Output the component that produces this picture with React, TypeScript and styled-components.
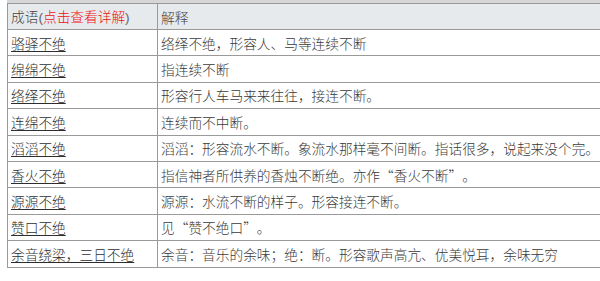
import React from "react";
import styled, { createGlobalStyle } from "styled-components";

const Global = createGlobalStyle`
  html, body { margin: 0; padding: 0; background: #ffffff; overflow: hidden; }
  body { font-family: "Noto Sans CJK SC", "Noto Sans", sans-serif; }
`;

const Page = styled.div`
  width: 600px;
  height: 281px;
  overflow: hidden;
  padding-left: 7px;
  box-sizing: border-box;
`;

const TopStrip = styled.div`
  width: 640px;
  height: 3px;
  background: #d6d6d6;
`;

const Table = styled.table`
  border-collapse: collapse;
  table-layout: fixed;
  width: 640px;
  font-size: 13.7px;
  font-weight: 300;
  color: #3a3a3a;
`;

const HeadCell = styled.th<{ $w?: number }>`
  width: ${(p) => (p.$w ? `${p.$w}px` : "auto")};
  height: 26px;
  padding: 0 3px;
  box-sizing: border-box;
  background: #e7eaed;
  border: 1px solid #9a9a9a;
  text-align: left;
  font-weight: 300;
  vertical-align: middle;
  line-height: 16px;
  color: #444;
  white-space: nowrap;
`;

const Red = styled.span`
  color: #f01010;
`;

const Paren = styled.span`
  font-family: "Liberation Sans", Arial, sans-serif;
  color: #666;
`;

const Row = styled.tr`
  height: 26.4px;
`;

const Cell = styled.td`
  padding: 0 3px;
  border: 1px solid #9a9a9a;
  vertical-align: middle;
  line-height: 16px;
  white-space: nowrap;
  overflow: hidden;
`;

const Quote = styled.span<{ $open: boolean }>`
  display: inline-block;
  width: 1em;
  text-align: ${(p) => (p.$open ? "right" : "left")};
`;

const Link = styled.a`
  color: #2e2e2e;
  text-decoration: underline;
  text-underline-offset: 2px;
  text-decoration-thickness: 1px;
`;

const rows: [string, string][] = [
  ["骆驿不绝", "络绎不绝，形容人、马等连续不断"],
  ["绵绵不绝", "指连续不断"],
  ["络绎不绝", "形容行人车马来来往往，接连不断。"],
  ["连绵不绝", "连续而不中断。"],
  ["滔滔不绝", "滔滔：形容流水不断。象流水那样毫不间断。指话很多，说起来没个完。"],
  ["香火不绝", "指信神者所供养的香烛不断绝。亦作“香火不断”。"],
  ["源源不绝", "源源：水流不断的样子。形容接连不断。"],
  ["赞口不绝", "见“赞不绝口”。"],
  ["余音绕梁，三日不绝", "余音：音乐的余味；绝：断。形容歌声高亢、优美悦耳，余味无穷"],
];

function renderText(text: string) {
  const parts = text.split(/([“”])/);
  return parts.map((p, i) =>
    p === "“" || p === "”" ? (
      <Quote key={i} $open={p === "“"}>
        {p}
      </Quote>
    ) : (
      <React.Fragment key={i}>{p}</React.Fragment>
    )
  );
}

export default function App() {
  return (
    <>
      <Global />
      <Page>
        <TopStrip />
        <Table>
          <thead>
            <tr>
              <HeadCell $w={150}>
                成语<Paren>(</Paren>
                <Red>点击查看详解</Red>
                <Paren>)</Paren>
              </HeadCell>
              <HeadCell>解释</HeadCell>
            </tr>
          </thead>
          <tbody>
            {rows.map(([word, desc], i) => (
              <Row key={i}>
                <Cell>
                  <Link href="#">{word}</Link>
                </Cell>
                <Cell>{renderText(desc)}</Cell>
              </Row>
            ))}
          </tbody>
        </Table>
      </Page>
    </>
  );
}
